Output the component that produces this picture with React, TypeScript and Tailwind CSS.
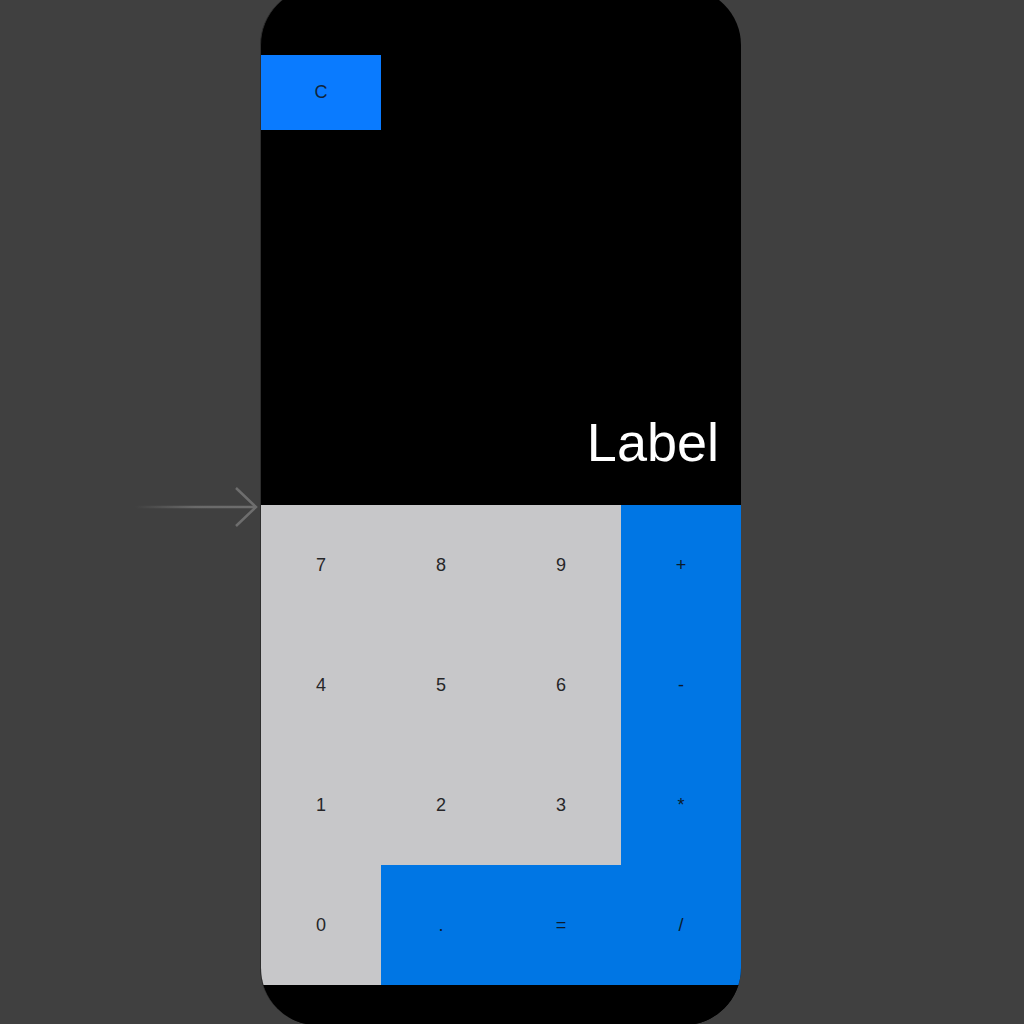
import React from "react";

const keys: { label: string; blue: boolean }[] = [
  { label: "7", blue: false },
  { label: "8", blue: false },
  { label: "9", blue: false },
  { label: "+", blue: true },
  { label: "4", blue: false },
  { label: "5", blue: false },
  { label: "6", blue: false },
  { label: "-", blue: true },
  { label: "1", blue: false },
  { label: "2", blue: false },
  { label: "3", blue: false },
  { label: "*", blue: true },
  { label: "0", blue: false },
  { label: ".", blue: true },
  { label: "=", blue: true },
  { label: "/", blue: true },
];

export default function App() {
  return (
    <div
      className="relative h-screen w-full overflow-hidden bg-[#404040]"
      style={{ fontFamily: '"Liberation Sans", Arial, sans-serif' }}
    >
      <div className="relative mt-[-12px] ml-[260px] flex h-[1037px] w-[481px] flex-col overflow-hidden rounded-[57px] border-l border-[#2e2e2e] bg-black">
        <div className="h-[67px]" />
        <div className="flex h-[75px] w-[120px] items-center justify-center bg-[#0a7bff] text-[18px] text-[#10243a]">
          C
        </div>
        <div className="flex h-[375px] items-end justify-end pb-[36px] pr-[22px]">
          <span className="text-[54px] leading-none text-white">Label</span>
        </div>
        <div className="grid grid-cols-4 grid-rows-4">
          {keys.map((k) => (
            <div
              key={k.label}
              className={
                "flex h-[120px] items-center justify-center text-[18px] " +
                (k.blue ? "bg-[#0076e4] text-[#0b1a2b]" : "bg-[#c7c7c9] text-[#262628]")
              }
            >
              {k.label}
            </div>
          ))}
        </div>
        <div className="flex-1 bg-black" />
      </div>
      <svg
        className="absolute left-[130px] top-[485px]"
        width="130"
        height="44"
        viewBox="0 0 130 44"
      >
        <defs>
          <linearGradient id="fade" gradientUnits="userSpaceOnUse" x1="5" y1="22" x2="126" y2="22">
            <stop offset="0" stopColor="#6e6e6e" stopOpacity="0" />
            <stop offset="0.5" stopColor="#6e6e6e" stopOpacity="0.9" />
            <stop offset="1" stopColor="#6e6e6e" stopOpacity="1" />
          </linearGradient>
        </defs>
        <line x1="5" y1="22" x2="126" y2="22" stroke="url(#fade)" strokeWidth="2.5" />
        <polyline
          points="106,3 126,22 106,41"
          fill="none"
          stroke="#6e6e6e"
          strokeWidth="2.5"
        />
      </svg>
    </div>
  );
}
